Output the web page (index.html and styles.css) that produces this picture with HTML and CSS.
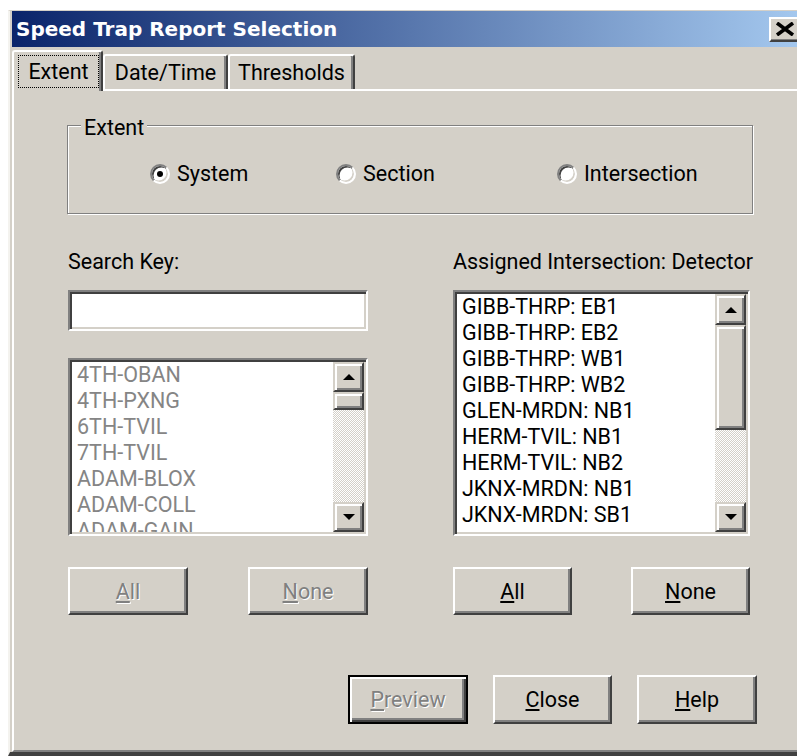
FILE: index.html
```html
<!DOCTYPE html>
<html lang="en">
<head>
<meta charset="utf-8">
<title>Speed Trap Report Selection</title>
<link rel="stylesheet" href="styles.css">
</head>
<body>
<div class="window">
  <div class="titlebar">
    <span class="title">Speed Trap Report Selection</span>
    <div class="close">
      <svg width="20" height="14" viewBox="0 0 20 14"><path d="M2 1 L18 13 M18 1 L2 13" stroke="#000" stroke-width="3.6" fill="none"/></svg>
    </div>
  </div>

  <div class="tabs">
    <div class="tab tab-active tab-extent"><span class="focus">Extent</span></div>
    <div class="tab tab-date">Date/Time</div>
    <div class="tab tab-thresholds">Thresholds</div>
  </div>

  <div class="page">
    <div class="group">
      <div class="group-label">Extent</div>
      <div class="radios">
        <div class="radio"><span class="radio-box checked"></span>System</div>
        <div class="radio"><span class="radio-box"></span>Section</div>
        <div class="radio"><span class="radio-box"></span>Intersection</div>
      </div>
    </div>

    <div class="columns">
      <div class="col col-left">
        <div class="label">Search Key:</div>
        <div class="edit sunken"></div>
        <div class="listbox listbox-left sunken disabled">
          <ul class="items">
            <li>4TH-OBAN</li>
            <li>4TH-PXNG</li>
            <li>6TH-TVIL</li>
            <li>7TH-TVIL</li>
            <li>ADAM-BLOX</li>
            <li>ADAM-COLL</li>
            <li>ADAM-GAIN</li>
          </ul>
          <div class="scrollbar">
            <div class="sb-btn raised"><span class="arrow-up"></span></div>
            <div class="sb-thumb raised thumb-small"></div>
            <div class="sb-track"></div>
            <div class="sb-btn raised"><span class="arrow-down"></span></div>
          </div>
        </div>
        <div class="btn-row">
          <div class="btn btn-disabled"><span><u>A</u>ll</span></div>
          <div class="btn btn-disabled"><span><u>N</u>one</span></div>
        </div>
      </div>

      <div class="col col-right">
        <div class="label">Assigned Intersection: Detector</div>
        <div class="listbox listbox-right sunken">
          <ul class="items">
            <li>GIBB-THRP: EB1</li>
            <li>GIBB-THRP: EB2</li>
            <li>GIBB-THRP: WB1</li>
            <li>GIBB-THRP: WB2</li>
            <li>GLEN-MRDN: NB1</li>
            <li>HERM-TVIL: NB1</li>
            <li>HERM-TVIL: NB2</li>
            <li>JKNX-MRDN: NB1</li>
            <li>JKNX-MRDN: SB1</li>
          </ul>
          <div class="scrollbar">
            <div class="sb-btn raised sb-btn-top"><span class="arrow-up"></span></div>
            <div class="sb-thumb raised thumb-large"></div>
            <div class="sb-track"></div>
            <div class="sb-btn raised"><span class="arrow-down"></span></div>
          </div>
        </div>
        <div class="btn-row">
          <div class="btn btn-narrow"><span><u>A</u>ll</span></div>
          <div class="btn btn-narrow"><span><u>N</u>one</span></div>
        </div>
      </div>
    </div>

    <div class="footer">
      <div class="btn btn-footer btn-default btn-disabled"><span><u>P</u>review</span></div>
      <div class="btn btn-footer btn-close"><span><u>C</u>lose</span></div>
      <div class="btn btn-footer"><span><u>H</u>elp</span></div>
    </div>
  </div>
</div>
</body>
</html>
```
FILE: styles.css
```css
* {
  box-sizing: border-box;
}

html,
body {
  margin: 0;
  padding: 0;
}

body {
  width: 797px;
  height: 756px;
  overflow: hidden;
  background: #ffffff;
  font-family: Roboto, "Liberation Sans", sans-serif;
  font-size: 21.5px;
  color: #000000;
}

/* dialog frame */
.window {
  margin: 10px 0 0 8px;
  width: 802px;
  height: 746px;
  display: flex;
  flex-direction: column;
  background: #d4d0c8;
  border-top: 1px solid #d4d0c8;
  border-left: 2px solid #f4f3ef;
  border-bottom: 4px solid #404040;
  padding-left: 2px;
}

.titlebar {
  height: 36px;
  flex: none;
  display: flex;
  align-items: center;
  justify-content: space-between;
  padding-left: 4px;
  background: linear-gradient(90deg, #0a246a 0%, #a6caf0 100%);
}

.title {
  font-family: "DejaVu Sans", Verdana, sans-serif;
  font-weight: bold;
  font-size: 20px;
  color: #ffffff;
  white-space: nowrap;
}

.close {
  width: 31px;
  height: 25px;
  margin-right: 10px;
  display: flex;
  align-items: center;
  justify-content: center;
  background: #d4d0c8;
  border: 2px solid;
  border-color: #ffffff #404040 #404040 #ffffff;
  box-shadow: inset -1px -1px #808080;
}

/* tab strip */
.tabs {
  height: 42px;
  flex: none;
  display: flex;
  align-items: flex-end;
}

.tab {
  height: 35px;
  line-height: 33px;
  text-align: center;
  white-space: nowrap;
  border-top: 2px solid #ffffff;
  border-left: 2px solid #ffffff;
  border-right: 2px solid #404040;
  border-radius: 3px 3px 0 0;
  box-shadow: inset -2px 0 #808080;
}

.tab-active {
  height: 41px;
  margin-bottom: -2px;
  position: relative;
  z-index: 1;
  display: flex;
  background: #d4d0c8;
}

.focus {
  flex: 1;
  margin: 3px 2px 3px 4px;
  border: 1px dotted #000000;
  line-height: 31px;
}

.tab-extent {
  width: 91px;
}

.tab-date {
  width: 125px;
}

.tab-thresholds {
  width: 127px;
}

.page {
  flex: 1;
  border-top: 2px solid #ffffff;
  border-left: 2px solid #ffffff;
  border-bottom: 2px solid #808080;
}

/* extent group box */
.group {
  margin: 34px 0 0 53px;
  width: 686px;
  height: 89px;
  border: 1px solid #808080;
  box-shadow: inset 1px 1px #ffffff, 1px 1px #ffffff;
}

.group-label {
  display: table;
  margin: -11px 0 0 13px;
  padding: 0 3px;
  line-height: 26px;
  background: #d4d0c8;
}

.radios {
  display: grid;
  grid-template-columns: 186px 221px auto;
  margin-top: 20px;
  padding-left: 82px;
  line-height: 26px;
}

.radio {
  display: flex;
  align-items: center;
  gap: 7px;
}

.radio-box {
  width: 20px;
  height: 20px;
  flex: none;
  display: flex;
  align-items: center;
  justify-content: center;
  border-radius: 50%;
  background: #ffffff;
  border: 2px solid;
  border-color: #808080 #ffffff #ffffff #808080;
  box-shadow: inset 1.5px 1.5px #404040, inset -1.5px -1.5px #d4d0c8;
}

.radio-box.checked::after {
  content: "";
  width: 6px;
  height: 6px;
  border-radius: 50%;
  background: #000000;
}

/* selection columns */
.columns {
  display: flex;
  gap: 85px;
  margin: 35px 0 0 54px;
}

.col {
  display: flex;
  flex-direction: column;
}

.col-left {
  width: 300px;
}

.col-right {
  width: 297px;
}

.label {
  line-height: 26px;
  white-space: nowrap;
}

.sunken {
  border: 2px solid;
  border-color: #808080 #ffffff #ffffff #808080;
  box-shadow: inset 2px 2px #404040, inset -2px -2px #d4d0c8;
  padding: 2px;
  background: #ffffff;
}

.edit {
  margin-top: 15px;
  height: 41px;
}

.listbox {
  display: flex;
}

.listbox-left {
  margin-top: 27px;
  height: 178px;
}

.listbox-right {
  margin-top: 15px;
  height: 246px;
}

.items {
  flex: 1;
  list-style: none;
  margin: 0;
  padding: 0 0 0 5px;
  overflow: hidden;
  line-height: 26px;
  white-space: nowrap;
}

.listbox.disabled .items {
  color: #858585;
}

.scrollbar {
  width: 31px;
  flex: none;
  display: flex;
  flex-direction: column;
}

.raised {
  background: #d4d0c8;
  border: 2px solid;
  border-color: #d4d0c8 #404040 #404040 #d4d0c8;
  box-shadow: inset 2px 2px #ffffff, inset -2px -2px #808080;
}

.sb-btn {
  height: 30px;
  flex: none;
  display: flex;
  align-items: center;
  justify-content: center;
}

.sb-btn-top {
  height: 31px;
}

.sb-thumb {
  flex: none;
}

.thumb-small {
  height: 18px;
}

.thumb-large {
  height: 105px;
}

.sb-track {
  flex: 1;
  background: repeating-conic-gradient(#ffffff 0 25%, #d4d0c8 0 50%) 0 0 / 2px 2px;
}

.arrow-up,
.arrow-down {
  width: 0;
  height: 0;
  border-left: 6px solid transparent;
  border-right: 6px solid transparent;
}

.arrow-up {
  border-bottom: 6px solid #000000;
}

.arrow-down {
  border-top: 6px solid #000000;
}

/* push buttons */
.btn-row {
  display: flex;
  justify-content: space-between;
  margin-top: 31px;
}

.btn {
  width: 120px;
  height: 48px;
  display: flex;
  align-items: center;
  justify-content: center;
  background: #d4d0c8;
  border: 2px solid;
  border-color: #ffffff #404040 #404040 #ffffff;
  box-shadow: inset -2px -2px #808080;
}

.btn-narrow {
  width: 119px;
}

.btn-disabled {
  color: #808080;
  text-shadow: 1px 1px 0 #ffffff;
}

.footer {
  display: flex;
  gap: 25px;
  margin: 60px 0 0 334px;
}

.btn-footer {
  height: 49px;
}

.btn-close {
  width: 119px;
}

.btn-default {
  border-color: #000000;
  box-shadow: inset 2px 2px #ffffff, inset -2px -2px #404040, inset -4px -4px #808080;
}
```
